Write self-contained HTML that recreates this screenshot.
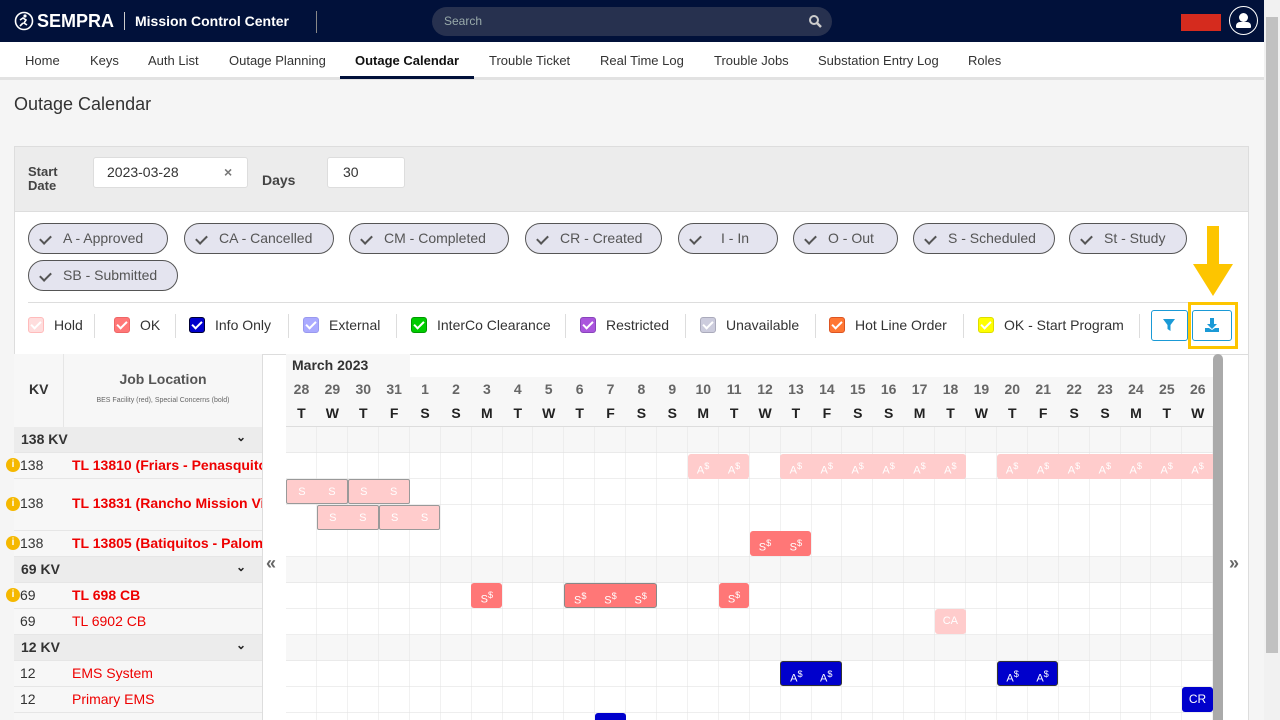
<!DOCTYPE html>
<html style="overflow:hidden;height:720px"><head><meta charset="utf-8"><style>
*{box-sizing:border-box;margin:0;padding:0}
body{width:1280px;height:720px;overflow:hidden;background:#f5f5f5;font-family:"Liberation Sans",Arial,sans-serif;position:relative}
.a{position:absolute}
.hdr{left:0;top:0;width:1264px;height:42px;background:#01113a}
.nav{left:0;top:42px;width:1264px;height:38px;background:#fff;border-bottom:3px solid #e2e2e2}
.nav span{position:absolute;top:11px;font-size:13px;color:#333}
.chip{position:absolute;height:31px;border:1px solid #555;border-radius:16px;background:#e4e4ef;color:#555;font-size:14px;line-height:29px;padding-left:34px}
.chip:before{content:"";position:absolute;left:13px;top:9px;width:5px;height:9px;border:solid #555;border-width:0 2px 2px 0;transform:rotate(45deg)}
.lg{position:absolute;top:316px;font-size:14px;color:#333;line-height:18px}
.cb{position:absolute;top:317px;width:16px;height:16px;border:1px solid;border-radius:3px}
.cb:after{content:"";position:absolute;left:4px;top:1px;width:4px;height:8px;border:solid #fff;border-width:0 2px 2px 0;transform:rotate(45deg)}
.sep{position:absolute;top:314px;width:1px;height:24px;background:#ddd}
.dh{position:absolute;left:286px;width:927px;display:flex;font-size:14px;font-weight:bold}
.dh div{flex:1;text-align:center}
.ev{position:absolute;left:calc(286px + var(--i)*30.9px);width:calc(var(--n)*30.9px);height:25px;display:flex;font-size:11px;color:#fff}
.ev div{flex:1;text-align:center;line-height:25px}
.row{position:absolute;left:14px;width:248px;border-bottom:1px solid #e6e6e6;font-size:14px}
.kv{position:absolute;left:14px;color:#333}
.jl{position:absolute;left:58px;color:#e00;white-space:nowrap;overflow:hidden;width:190px}
.grp{background:#ececec;font-weight:bold;color:#222}
.info{position:absolute;left:-8px;width:14px;height:14px;border-radius:7px;background:#f5b800;color:#fff;font-size:10px;text-align:center;line-height:14px;font-weight:bold}
#wrap{position:absolute;left:0;top:0;width:1280px;height:720px;overflow:hidden}
</style></head><body><div id="wrap">
<div class="a hdr">
 <svg class="a" style="left:14px;top:11px" width="20" height="20" viewBox="0 0 20 20"><circle cx="10" cy="10" r="8.5" fill="none" stroke="#fff" stroke-width="1.6"/><circle cx="11" cy="5" r="1.6" fill="#fff"/><path d="M6 9l3-2 3 2-2 3 3 2M9 12l-3 3" stroke="#fff" stroke-width="1.6" fill="none"/></svg>
 <span class="a" style="left:37px;top:11px;color:#fff;font-weight:bold;font-size:18px">SEMPRA</span>
 <div class="a" style="left:124px;top:12px;width:1px;height:18px;background:#ccc"></div>
 <span class="a" style="left:135px;top:13px;color:#fff;font-weight:bold;font-size:14px">Mission Control Center</span>
 <div class="a" style="left:316px;top:11px;width:1px;height:22px;background:#888"></div>
 <div class="a" style="left:432px;top:7px;width:400px;height:29px;background:#27314f;border-radius:15px;color:#9aa;font-size:12px;line-height:29px;padding-left:12px">Search</div>
 <svg class="a" style="left:808px;top:14px" width="14" height="14" viewBox="0 0 14 14"><circle cx="6" cy="6" r="4" fill="none" stroke="#ccc" stroke-width="2"/><path d="M9 9l4 4" stroke="#ccc" stroke-width="2.5"/></svg>
 <div class="a" style="left:1181px;top:14px;width:40px;height:17px;background:#d52b1e"></div>
 <div class="a" style="left:1229px;top:6px;width:29px;height:29px;border:1.5px solid #fff;border-radius:50%"></div>
 <div class="a" style="left:1239px;top:13px;width:9px;height:9px;background:#fff;border-radius:50%"></div>
 <div class="a" style="left:1236px;top:22px;width:15px;height:6px;background:#fff;border-radius:4px 4px 1px 1px"></div>
</div>
<div class="a nav">
<span style="left:25px">Home</span><span style="left:90px">Keys</span><span style="left:148px">Auth List</span><span style="left:229px">Outage Planning</span><span style="left:355px;color:#111;font-weight:bold">Outage Calendar</span><span style="left:489px">Trouble Ticket</span><span style="left:600px">Real Time Log</span><span style="left:714px">Trouble Jobs</span><span style="left:818px">Substation Entry Log</span><span style="left:968px">Roles</span>
<div class="a" style="left:340px;top:34px;width:134px;height:3px;background:#01113a"></div>
</div>
<div class="a" style="left:1264px;top:0;width:16px;height:720px;background:#f1f1f1"><div class="a" style="left:2px;top:17px;width:12px;height:636px;background:#c1c1c1"></div></div>
<div class="a" style="left:14px;top:94px;font-size:18px;color:#333">Outage Calendar</div>
<div class="a" style="left:14px;top:146px;width:1235px;height:66px;background:#ececec;border:1px solid #ddd"></div>
<div class="a" style="left:28px;top:165px;font-size:13px;font-weight:bold;color:#444;line-height:14px">Start<br>Date</div>
<div class="a" style="left:93px;top:157px;width:155px;height:31px;background:#fff;border:1px solid #ddd;border-radius:3px;font-size:14px;color:#333;line-height:29px;padding-left:13px">2023-03-28<span class="a" style="left:130px;color:#777;font-weight:bold">×</span></div>
<div class="a" style="left:262px;top:172px;font-size:14px;font-weight:bold;color:#444">Days</div>
<div class="a" style="left:327px;top:157px;width:78px;height:31px;background:#fff;border:1px solid #ddd;border-radius:3px;font-size:14px;color:#333;line-height:29px;padding-left:15px">30</div>
<div class="a" style="left:14px;top:212px;width:1235px;height:142px;background:#fff;border-left:1px solid #ddd;border-right:1px solid #ddd"></div>
<div class="chip" style="left:28px;top:223px;width:140px">A - Approved</div>
<div class="chip" style="left:184px;top:223px;width:150px">CA - Cancelled</div>
<div class="chip" style="left:349px;top:223px;width:160px">CM - Completed</div>
<div class="chip" style="left:525px;top:223px;width:137px">CR - Created</div>
<div class="chip" style="left:678px;top:223px;width:100px;padding-left:42px">I - In</div>
<div class="chip" style="left:793px;top:223px;width:105px">O - Out</div>
<div class="chip" style="left:913px;top:223px;width:142px">S - Scheduled</div>
<div class="chip" style="left:1069px;top:223px;width:118px">St - Study</div>
<div class="chip" style="left:28px;top:260px;width:150px">SB - Submitted</div>
<div class="a" style="left:28px;top:302px;width:1207px;height:1px;background:#ddd"></div>
<div class="cb" style="left:28px;background:#fdd;border-color:#fbb"></div><span class="lg" style="left:54px">Hold</span><div class="sep" style="left:94px"></div>
<div class="cb" style="left:114px;background:#f77;border-color:#e66"></div><span class="lg" style="left:140px">OK</span><div class="sep" style="left:175px"></div>
<div class="cb" style="left:189px;background:#00c;border-color:#003"></div><span class="lg" style="left:215px">Info Only</span><div class="sep" style="left:288px"></div>
<div class="cb" style="left:303px;background:#aaf;border-color:#99e"></div><span class="lg" style="left:329px">External</span><div class="sep" style="left:396px"></div>
<div class="cb" style="left:411px;background:#0c0;border-color:#090"></div><span class="lg" style="left:437px">InterCo Clearance</span><div class="sep" style="left:565px"></div>
<div class="cb" style="left:580px;background:#a5d;border-color:#84b"></div><span class="lg" style="left:606px">Restricted</span><div class="sep" style="left:685px"></div>
<div class="cb" style="left:700px;background:#ccd;border-color:#aab"></div><span class="lg" style="left:726px">Unavailable</span><div class="sep" style="left:815px"></div>
<div class="cb" style="left:829px;background:#f73;border-color:#d52"></div><span class="lg" style="left:855px">Hot Line Order</span><div class="sep" style="left:963px"></div>
<div class="cb" style="left:978px;background:#ff0;border-color:#dd0"></div><span class="lg" style="left:1004px">OK - Start Program</span><div class="sep" style="left:1139px"></div>
<div class="a" style="left:1151px;top:310px;width:37px;height:31px;border:1px solid #1a9ad6;border-radius:3px"></div>
<svg class="a" style="left:1162px;top:318px" width="14" height="14" viewBox="0 0 14 14"><path d="M1 1h12L8.5 7v6L5.5 11V7z" fill="#1a9ad6"/></svg>
<div class="a" style="left:1192px;top:310px;width:40px;height:31px;border:1px solid #1a9ad6;border-radius:3px"></div>
<svg class="a" style="left:1204px;top:317px" width="16" height="16" viewBox="0 0 16 16"><path d="M6 1h4v6h3l-5 5-5-5h3z" fill="#1a9ad6"/><path d="M1 11h4l3 2 3-2h4v4H1z" fill="#1a9ad6"/></svg>
<div class="a" style="left:1188px;top:302px;width:50px;height:47px;border:3px solid #fdc500"></div>
<svg class="a" style="left:1190px;top:224px" width="46" height="72" viewBox="0 0 46 72"><path d="M17 2h12v38h14L23 72 3 40h14z" fill="#fdc500"/></svg>
<!-- calendar -->
<div class="a" style="left:14px;top:354px;width:1235px;height:380px;background:#fff;border:1px solid #ddd"></div>
<div class="a" style="left:14px;top:354px;width:248px;height:366px;background:#f7f7f7"></div>
<div class="a" style="left:14px;top:354px;width:50px;height:73px;border-right:1px solid #e6e6e6"></div>
<div class="a" style="left:29px;top:381px;font-size:14px;font-weight:bold;color:#333">KV</div>
<div class="a" style="left:64px;top:371px;width:198px;text-align:center;font-size:14px;font-weight:bold;color:#555">Job Location</div>
<div class="a" style="left:64px;top:397px;width:198px;text-align:center;font-size:7px;color:#666">BES Facility (red), Special Concerns (bold)</div>
<div class="a" style="left:262px;top:354px;width:1px;height:366px;background:#ddd"></div>
<div class="a" style="left:266px;top:553px;font-size:18px;color:#666;font-weight:bold">«</div>
<div class="a" style="left:1229px;top:553px;font-size:18px;color:#666;font-weight:bold">»</div>
<div class="a" style="left:286px;top:354px;width:124px;height:23px;background:#f7f7f7;font-size:14px;font-weight:bold;color:#333;padding:3px 0 0 6px">March 2023</div>
<div class="a" style="left:286px;top:377px;width:927px;height:50px;background:#f7f7f7;border-bottom:1px solid #ddd"></div>
<div class="dh" style="top:381px;color:#666"><div>28</div><div>29</div><div>30</div><div>31</div><div>1</div><div>2</div><div>3</div><div>4</div><div>5</div><div>6</div><div>7</div><div>8</div><div>9</div><div>10</div><div>11</div><div>12</div><div>13</div><div>14</div><div>15</div><div>16</div><div>17</div><div>18</div><div>19</div><div>20</div><div>21</div><div>22</div><div>23</div><div>24</div><div>25</div><div>26</div></div>
<div class="dh" style="top:405px;color:#222"><div>T</div><div>W</div><div>T</div><div>F</div><div>S</div><div>S</div><div>M</div><div>T</div><div>W</div><div>T</div><div>F</div><div>S</div><div>S</div><div>M</div><div>T</div><div>W</div><div>T</div><div>F</div><div>S</div><div>S</div><div>M</div><div>T</div><div>W</div><div>T</div><div>F</div><div>S</div><div>S</div><div>M</div><div>T</div><div>W</div></div>
<div class="a" style="left:286px;top:427px;width:927px;height:26px;background:#f7f7f7"></div>
<div class="a" style="left:286px;top:557px;width:927px;height:26px;background:#f7f7f7"></div>
<div class="a" style="left:286px;top:635px;width:927px;height:26px;background:#f7f7f7"></div>
<div class="a" style="left:286px;top:427px;width:927px;height:293px;background-image:repeating-linear-gradient(90deg,transparent 0 30.4px,#e3e3e3 30.4px 30.9px),repeating-linear-gradient(180deg,transparent 0 25.5px,#dcdcdc 25.5px 26px)"></div>
<div class="a" style="left:286px;top:505px;width:927px;height:26px;background:#fff;background-image:repeating-linear-gradient(90deg,transparent 0 30.4px,#e3e3e3 30.4px 30.9px)"></div>
<div class="a" style="left:1213px;top:354px;width:10px;height:366px;background:#aaa;border-radius:5px 5px 0 0"></div>
<!-- left rows -->
<div class="row grp" style="top:427px;height:26px"><span class="kv" style="left:7px;top:4px">138 KV</span><span class="a" style="left:222px;top:3px;font-size:12px">⌄</span></div>
<div class="row" style="top:453px;height:26px"><span class="info" style="top:5px">i</span><span class="kv" style="left:6px;top:4px">138</span><span class="jl" style="top:4px;font-weight:bold">TL 13810 (Friars - Penasquitos)</span></div>
<div class="row" style="top:479px;height:52px"><span class="info" style="top:18px">i</span><span class="kv" style="left:6px;top:16px">138</span><span class="jl" style="top:16px;font-weight:bold">TL 13831 (Rancho Mission Viejo)</span></div>
<div class="row" style="top:531px;height:26px"><span class="info" style="top:5px">i</span><span class="kv" style="left:6px;top:4px">138</span><span class="jl" style="top:4px;font-weight:bold">TL 13805 (Batiquitos - Palomar)</span></div>
<div class="row grp" style="top:557px;height:26px"><span class="kv" style="left:7px;top:4px">69 KV</span><span class="a" style="left:222px;top:3px;font-size:12px">⌄</span></div>
<div class="row" style="top:583px;height:26px"><span class="info" style="top:5px">i</span><span class="kv" style="left:6px;top:4px">69</span><span class="jl" style="top:4px;font-weight:bold">TL 698 CB</span></div>
<div class="row" style="top:609px;height:26px"><span class="kv" style="left:6px;top:4px">69</span><span class="jl" style="top:4px">TL 6902 CB</span></div>
<div class="row grp" style="top:635px;height:26px"><span class="kv" style="left:7px;top:4px">12 KV</span><span class="a" style="left:222px;top:3px;font-size:12px">⌄</span></div>
<div class="row" style="top:661px;height:26px"><span class="kv" style="left:6px;top:4px">12</span><span class="jl" style="top:4px">EMS System</span></div>
<div class="row" style="top:687px;height:26px"><span class="kv" style="left:6px;top:4px">12</span><span class="jl" style="top:4px">Primary EMS</span></div>
<div class="row" style="top:713px;height:26px"><span class="kv" style="left:6px;top:4px">12</span><span class="jl" style="top:4px">MCC Video Wall</span></div>
<!-- events -->
<div class="ev" style="--i:13;--n:2;top:454px;background:#fcc;border-radius:3px"><div>A<sup>$</sup></div><div>A<sup>$</sup></div></div>
<div class="ev" style="--i:16;--n:6;top:454px;background:#fcc;border-radius:3px"><div>A<sup>$</sup></div><div>A<sup>$</sup></div><div>A<sup>$</sup></div><div>A<sup>$</sup></div><div>A<sup>$</sup></div><div>A<sup>$</sup></div></div>
<div class="ev" style="--i:23;--n:7;top:454px;background:#fcc;border-radius:3px 0 0 3px"><div>A<sup>$</sup></div><div>A<sup>$</sup></div><div>A<sup>$</sup></div><div>A<sup>$</sup></div><div>A<sup>$</sup></div><div>A<sup>$</sup></div><div>A<sup>$</sup></div></div>
<div class="ev" style="--i:0;--n:2;top:479px;background:#fcc;border:1px solid #999;border-radius:2px"><div>S</div><div>S</div></div>
<div class="ev" style="--i:2;--n:2;top:479px;background:#fcc;border:1px solid #999;border-radius:2px"><div>S</div><div>S</div></div>
<div class="ev" style="--i:1;--n:2;top:505px;background:#fcc;border:1px solid #999;border-radius:2px"><div>S</div><div>S</div></div>
<div class="ev" style="--i:3;--n:2;top:505px;background:#fcc;border:1px solid #999;border-radius:2px"><div>S</div><div>S</div></div>
<div class="ev" style="--i:15;--n:2;top:531px;background:#f77;border-radius:3px"><div>S<sup>$</sup></div><div>S<sup>$</sup></div></div>
<div class="ev" style="--i:6;--n:1;top:583px;background:#f77;border-radius:3px"><div>S<sup>$</sup></div></div>
<div class="ev" style="--i:9;--n:3;top:583px;background:#f77;border:1px solid #888;border-radius:3px"><div>S<sup>$</sup></div><div>S<sup>$</sup></div><div>S<sup>$</sup></div></div>
<div class="ev" style="--i:14;--n:1;top:583px;background:#f77;border-radius:3px"><div>S<sup>$</sup></div></div>
<div class="ev" style="--i:21;--n:1;top:609px;background:#fcc;border-radius:3px"><div>CA</div></div>
<div class="ev" style="--i:16;--n:2;top:661px;background:#00c;border:1px solid #333;border-radius:3px"><div>A<sup>$</sup></div><div>A<sup>$</sup></div></div>
<div class="ev" style="--i:23;--n:2;top:661px;background:#00c;border:1px solid #333;border-radius:3px"><div>A<sup>$</sup></div><div>A<sup>$</sup></div></div>
<div class="ev" style="--i:29;--n:1;top:687px;background:#00c;border-radius:3px;font-size:12px"><div>CR</div></div>
<div class="ev" style="--i:10;--n:1;top:713px;background:#00c;border-radius:3px"><div></div></div>
</div></body></html>
